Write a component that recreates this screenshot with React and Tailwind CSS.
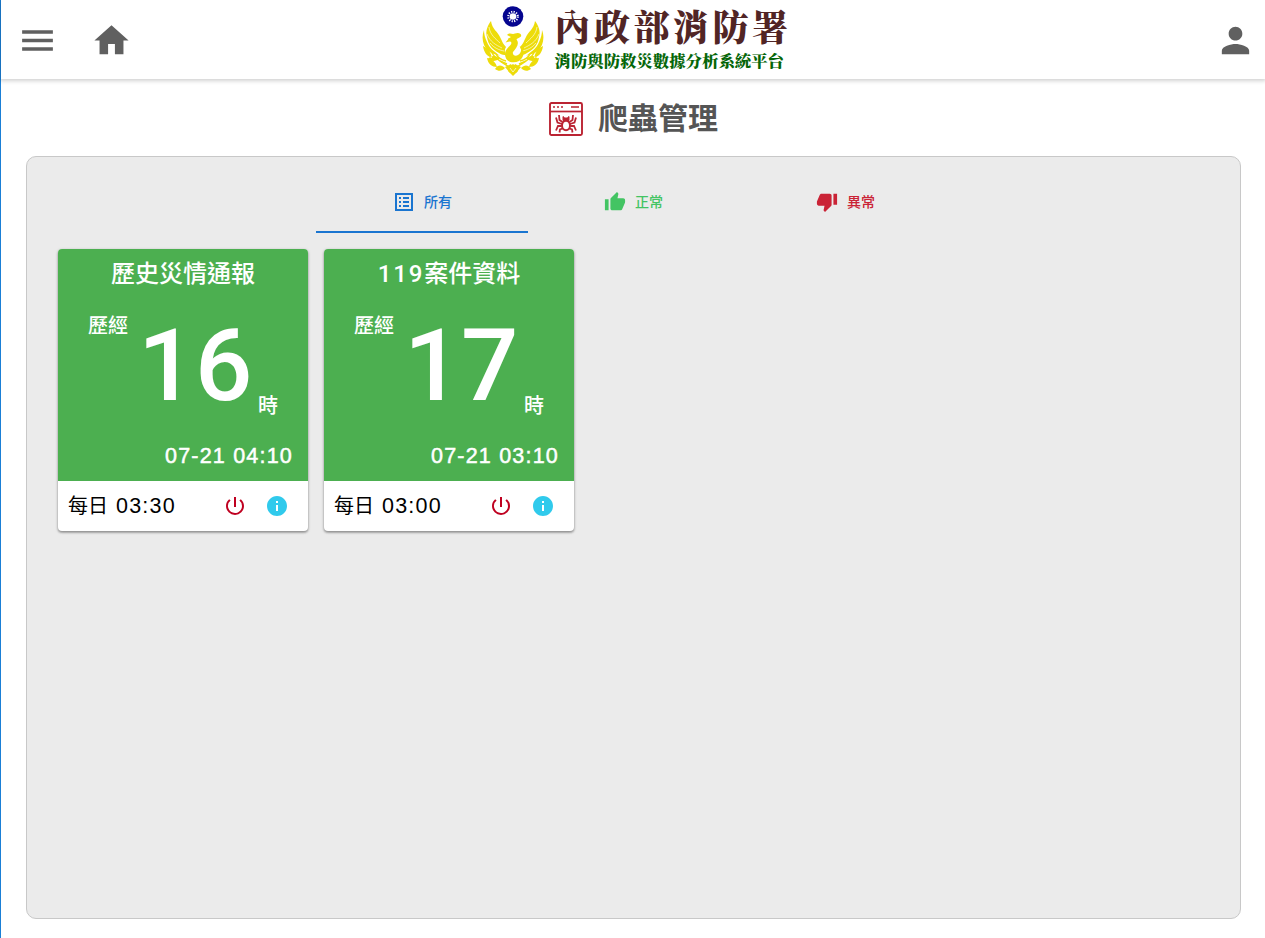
import React from "react";
import {
  MdMenu,
  MdHome,
  MdPerson,
  MdThumbUp,
  MdThumbDown,
  MdPowerSettingsNew,
  MdInfo,
} from "react-icons/md";

function Emblem() {
  return (
    <svg width="62" height="73" viewBox="0 0 62 73" fill="none" className="mt-[2px] shrink-0">
      {[false, true].map((flip) => (
        <g key={String(flip)} transform={flip ? "translate(62 0) scale(-1 1)" : undefined}>
          <path
            d="M9 16C6 20 3 26 5 32C6 40 11 45 17 48C20 50 22 50 24 50C22 46 23 44 24 42C21 39 20 36 18 32C16 27 10 24 9 16Z"
            fill="#eddc0a"
          />
          <path d="M2 25C-1 33 1 41 6 46C10 49 14 49 18 51C12 46 7 43 5 37C3 33 2 29 2 25Z" fill="#eddc0a" />
          <path
            d="M7 22C8 30 14 34 18 38M5 29C8 37 14 40 20 43M8 38C12 43 17 45 22 46"
            stroke="#fff"
            strokeWidth=".6"
          />
          <path d="M1 41C2 48 5 51 10 53C9 48 6 43 1 41ZM6 54C9 50 14 50 18 54C14 56 10 57 6 54Z" fill="#eddc0a" />
          <path d="M5 53C6 59 10 62 15 62C14 58 11 54 5 53ZM13 64C16 59 20 60 23 63C20 66 17 67 13 64Z" fill="#eddc0a" />
          <path d="M10 48C14 55 20 57 27 62" stroke="#eddc0a" strokeWidth="1.4" />
          <path d="M14 49C16 53 20 55 24 56M18 56L25 59" stroke="#eddc0a" strokeWidth="1.6" />
          <path d="M23 62L29 59L31 63L28 68Z" fill="#eddc0a" />
        </g>
      ))}
      <path
        d="M25 30C28 27 30 30 33 28.5C37 27 40 29 39 31.5C37 33.5 35 33 34.5 34.5C38 39 34 43 31 47C30 49.5 33 52 36 50C39.500 47.500 40 44 37.500 41C43 44 43 52 37 56C32 58.500 25 57.500 23.500 52C21.500 46 26 43 28.500 40C30 38 29.500 36.500 27.500 36.500L23.500 37.500L26 34.500C26.500 32.500 28 33 29 32Z"
        fill="#eddc0a"
      />
      <path d="M28 61L31 59L34 61L36 66L31 71L26 66Z" fill="#eddc0a" />
      <path d="M28 63L31 67L34 63" stroke="#fff" strokeWidth=".7" />
      <circle cx="31" cy="11.5" r="10.3" fill="#05058f" />
      <circle cx="31" cy="11.5" r="3.3" fill="#fff" />
      <circle cx="31" cy="11.5" r="4.8" stroke="#fff" strokeWidth="2" strokeDasharray="1.2 1.313" />
    </svg>
  );
}

function SpiderWindow() {
  return (
    <svg width="34" height="34" viewBox="0 0 34 34" fill="none" stroke="#bb2433" className="mt-[2px] shrink-0">
      <rect x="1" y="1" width="32" height="32" rx="1.5" strokeWidth="1.9" />
      <path d="M1 9.500H33" strokeWidth="1.7" />
      <path d="M4 5H6M8 5H10M12 5H14M22 5H30" strokeWidth="1.6" />
      <ellipse cx="17" cy="23.5" rx="4" ry="4.8" strokeWidth="2" />
      <path d="M14 18.500V14.500L15.800 16H18.200L20 14.500V18.500Z" fill="#bb2433" strokeWidth="1" />
      <path
        d="M13.500 20L10.500 18L10 13M20.500 20L23.500 18L24 13M13 22L8.500 20.500L7 15.500M21 22L25.500 20.500L27 15.500M12.700 24H9L7 28.500M21.300 24H25L27 28.500M13.500 26.500L11 27.500L10.500 30.500M20.500 26.500L23 27.500L23.500 30.500"
        strokeWidth="1.8"
      />
    </svg>
  );
}

function ListIcon() {
  return (
    <svg width="24" height="24" viewBox="0 0 24 24" fill="#1a75d0">
      <path
        d="M3 3H21V21H3ZM5 5V19H19V5ZM7 7H9V9H7ZM11 7H17V9H11ZM7 11H9V13H7ZM11 11H17V13H11ZM7 15H9V17H7ZM11 15H17V17H11Z"
        fillRule="evenodd"
      />
    </svg>
  );
}

function Card({ prefix, title, hours, time, schedule }) {
  return (
    <article className="flex h-[282px] w-[250px] flex-col overflow-hidden rounded bg-white shadow-[0_1px_3px_rgba(0,0,0,0.35),0_2px_2px_rgba(0,0,0,0.16)]">
      <div className="flex h-[232px] flex-col bg-[#4caf50] font-medium text-white">
        <h2 className="h-[50px] shrink-0 text-center text-[24px] leading-[49px]">
          {prefix && <span className="font-['Roboto'] tracking-[1.8px]">{prefix}</span>}
          {title}
        </h2>
        <div className="flex h-[132px] shrink-0 pl-[30px]">
          <span className="mt-[12px] w-10 shrink-0 text-[20px] leading-[30px]">歷經</span>
          <span className="mt-[14px] ml-[10px] w-[120px] shrink-0 font-['Roboto'] text-[101px] leading-[106px] tracking-[-0.5px]">
            {hours}
          </span>
          <span className="mt-[92px] text-[20px] leading-[30px]">時</span>
        </div>
        <p className="h-[50px] shrink-0 pt-px pr-[15px] text-right text-[21.5px] font-normal leading-[49px] tracking-[1.2px] [-webkit-text-stroke:0.5px_white]">
          {time}
        </p>
      </div>
      <div className="flex h-[50px] items-center pl-[10px] text-black">
        <span className="text-[20px]">每日</span>
        <span className="ml-[8px] w-[107px] text-[21.5px] tracking-[1.2px]">{schedule}</span>
        <MdPowerSettingsNew size={24} color="#bf0020" className="shrink-0" />
        <MdInfo size={24} color="#30caec" className="ml-[18px] shrink-0" />
      </div>
    </article>
  );
}

export default function App() {
  return (
    <div className="flex h-[938px] w-full flex-col border-l border-[#1a7fd6] bg-white font-['Liberation_Sans','Noto_Sans_CJK_TC',sans-serif]">
      <header className="mb-px flex h-[79px] shrink-0 items-center justify-between pt-px pr-[9px] pl-4 text-[#606060] shadow-[0_1px_4px_1px_rgba(0,0,0,0.18)]">
        <div className="flex w-[465px] gap-[32.5px]">
          <MdMenu size={41} />
          <MdHome size={41} />
        </div>
        <div className="flex w-[310px] shrink-0 items-center gap-[11px]">
          <Emblem />
          <div className="flex flex-col whitespace-nowrap font-['Noto_Serif_CJK_TC','Noto_Sans_CJK_TC',serif]">
            <span className="text-[36px] font-black leading-[38px] tracking-[3.5px] text-[#512525]">內政部消防署</span>
            <span className="pt-[3px] text-[16.4px] font-black leading-[25px] text-[#056608]">
              消防與防救災數據分析系統平台
            </span>
          </div>
        </div>
        <div className="flex w-[465px] justify-end">
          <MdPerson size={41} />
        </div>
      </header>

      <div className="flex h-[76px] shrink-0 items-center justify-center gap-[15px] pl-[1px]">
        <SpiderWindow />
        <h1 className="pt-[2px] text-[30px] font-bold leading-[40px] text-[#555]">爬蟲管理</h1>
      </div>

      <main className="mr-6 ml-[25px] h-[763px] rounded-[10px] border border-[#c8c8c8] bg-[#ebebeb] pt-[14px]">
        <nav className="mx-auto flex h-[62px] w-[636px] text-[14px] font-medium">
          <div className="flex w-[212px] items-center justify-center gap-2 border-b-2 border-[#1a75d0] pt-[2px] pl-[1px] text-[#1a75d0]">
            <ListIcon />
            所有
          </div>
          <div className="flex w-[212px] items-center justify-center gap-[9px] border-b-2 border-transparent pt-[2px] text-[#43c463]">
            <MdThumbUp size={22} />
            正常
          </div>
          <div className="flex w-[212px] items-center justify-center gap-[9px] border-b-2 border-transparent pt-[2px] text-[#ca2336]">
            <MdThumbDown size={22} />
            異常
          </div>
        </nav>
        <section className="mt-4 ml-[31px] flex gap-4">
          <Card title="歷史災情通報" hours="16" time="07-21 04:10" schedule="03:30" />
          <Card prefix="119" title="案件資料" hours="17" time="07-21 03:10" schedule="03:00" />
        </section>
      </main>
    </div>
  );
}
